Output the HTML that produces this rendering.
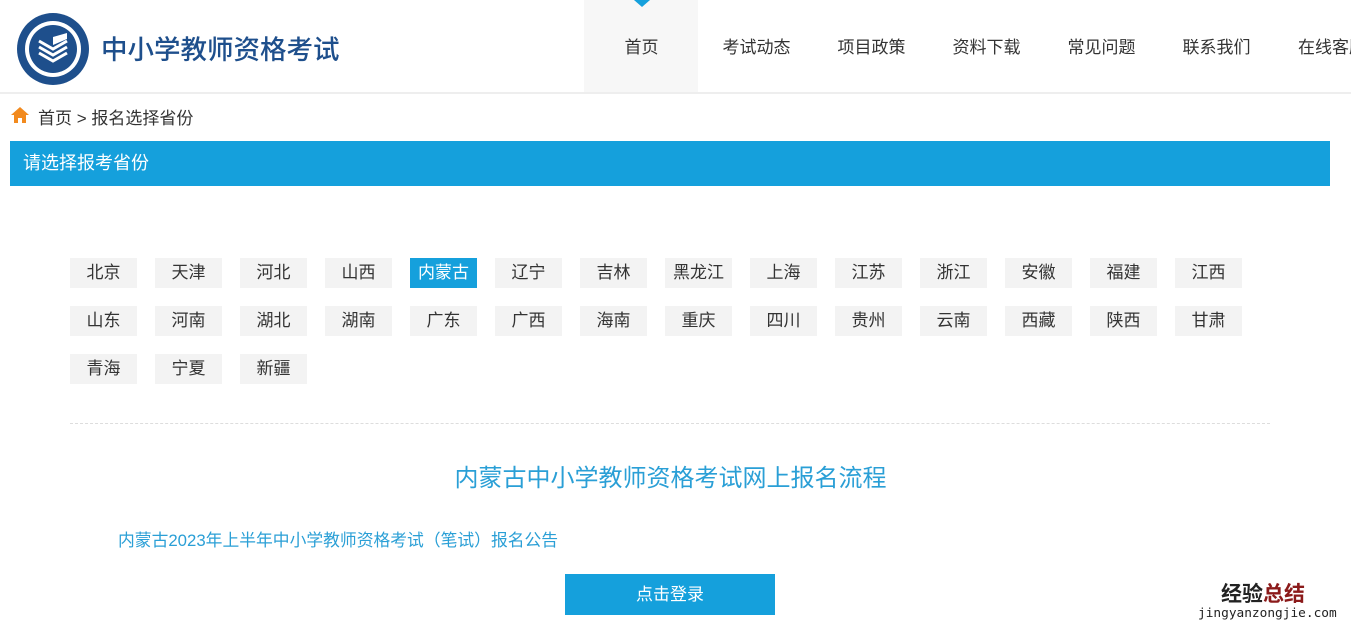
<!DOCTYPE html>
<html><head><meta charset="utf-8"><style>
*{margin:0;padding:0;box-sizing:border-box}
body{width:1351px;height:632px;overflow:hidden;background:#fff;font-family:"Liberation Sans","Noto Sans CJK SC",sans-serif;color:#333;position:relative}
.a{position:absolute}
.nav{top:2px;height:90px;width:115px;text-align:center;line-height:92px;font-size:17px;color:#333}
.p{position:absolute;width:67px;height:30px;background:#f3f3f3;text-align:center;line-height:30px;font-size:17px;color:#333}
.p.on{background:#15a0dc;color:#fff}
</style></head><body>
<div class="a" style="left:0;top:92px;width:1351px;height:2px;background:#eee"></div>
<svg class="a" style="left:15px;top:11px" width="78" height="76" viewBox="0 0 78 76">
<circle cx="38" cy="38" r="36" fill="#1e4f8c"/><circle cx="38" cy="38" r="28" fill="#fff"/><circle cx="38" cy="38" r="24" fill="#1e4f8c"/>
<path d="M24 30 L38 38 L52 30 M24 36 L38 44 L52 36 M24 42 L38 50 L52 42" stroke="#fff" stroke-width="3" fill="none"/>
<path d="M38 26 L52 22 L52 28 L38 34Z" fill="#fff"/></svg>
<div class="a" style="left:101px;top:28px;font-size:26.5px;color:#1e4f8c;font-weight:500">中小学教师资格考试</div>
<div class="a" style="left:584px;top:0;width:114px;height:92px;background:#f7f7f7"></div>
<div class="a" style="left:634px;top:0;width:0;height:0;border-left:8px solid transparent;border-right:8px solid transparent;border-top:7px solid #15a0dc"></div>
<div class="a nav" style="left:584px">首页</div>
<div class="a nav" style="left:699px">考试动态</div>
<div class="a nav" style="left:814px">项目政策</div>
<div class="a nav" style="left:929px">资料下载</div>
<div class="a nav" style="left:1044px">常见问题</div>
<div class="a nav" style="left:1159px">联系我们</div>
<div class="a nav" style="left:1274px;text-align:left;padding-left:24px;white-space:nowrap;width:200px">在线客服</div>
<svg class="a" style="left:10px;top:106px" width="20" height="18" viewBox="0 0 20 18"><path d="M10 1 L19 9 L16 9 L16 17 L12 17 L12 12 L8 12 L8 17 L4 17 L4 9 L1 9Z" fill="#f28a1e"/></svg>
<div class="a" style="left:38px;top:104px;font-size:17px">首页 &gt; 报名选择省份</div>
<div class="a" style="left:10px;top:141px;width:1320px;height:45px;background:#15a0dc;color:#fff;font-size:18px;line-height:45px;padding-left:13px">请选择报考省份</div>
<div class="p" style="left:70px;top:258px">北京</div><div class="p" style="left:155px;top:258px">天津</div><div class="p" style="left:240px;top:258px">河北</div><div class="p" style="left:325px;top:258px">山西</div><div class="p on" style="left:410px;top:258px">内蒙古</div><div class="p" style="left:495px;top:258px">辽宁</div><div class="p" style="left:580px;top:258px">吉林</div><div class="p" style="left:665px;top:258px">黑龙江</div><div class="p" style="left:750px;top:258px">上海</div><div class="p" style="left:835px;top:258px">江苏</div><div class="p" style="left:920px;top:258px">浙江</div><div class="p" style="left:1005px;top:258px">安徽</div><div class="p" style="left:1090px;top:258px">福建</div><div class="p" style="left:1175px;top:258px">江西</div>
<div class="p" style="left:70px;top:306px">山东</div><div class="p" style="left:155px;top:306px">河南</div><div class="p" style="left:240px;top:306px">湖北</div><div class="p" style="left:325px;top:306px">湖南</div><div class="p" style="left:410px;top:306px">广东</div><div class="p" style="left:495px;top:306px">广西</div><div class="p" style="left:580px;top:306px">海南</div><div class="p" style="left:665px;top:306px">重庆</div><div class="p" style="left:750px;top:306px">四川</div><div class="p" style="left:835px;top:306px">贵州</div><div class="p" style="left:920px;top:306px">云南</div><div class="p" style="left:1005px;top:306px">西藏</div><div class="p" style="left:1090px;top:306px">陕西</div><div class="p" style="left:1175px;top:306px">甘肃</div>
<div class="p" style="left:70px;top:354px">青海</div><div class="p" style="left:155px;top:354px">宁夏</div><div class="p" style="left:240px;top:354px">新疆</div>
<div class="a" style="left:70px;top:423px;width:1200px;border-top:1px dashed #ddd"></div>
<div class="a" style="left:0;top:458px;width:1341px;text-align:center;font-size:24px;color:#2a9fd6">内蒙古中小学教师资格考试网上报名流程</div>
<div class="a" style="left:118px;top:527px;font-size:16.8px;color:#2a9fd6">内蒙古2023年上半年中小学教师资格考试（笔试）报名公告</div>
<div class="a" style="left:565px;top:574px;width:210px;height:41px;background:#15a0dc;color:#fff;text-align:center;line-height:41px;font-size:17px">点击登录</div>
<div class="a" style="left:1221px;top:584px;font-size:21px;line-height:21px;font-weight:bold;color:#222">经验<span style="color:#8b1a1a">总结</span></div>
<div class="a" style="left:1198px;top:607px;font-size:12.8px;line-height:13px;color:#222;font-family:'DejaVu Sans Mono',monospace">jingyanzongjie.com</div>
</body></html>
